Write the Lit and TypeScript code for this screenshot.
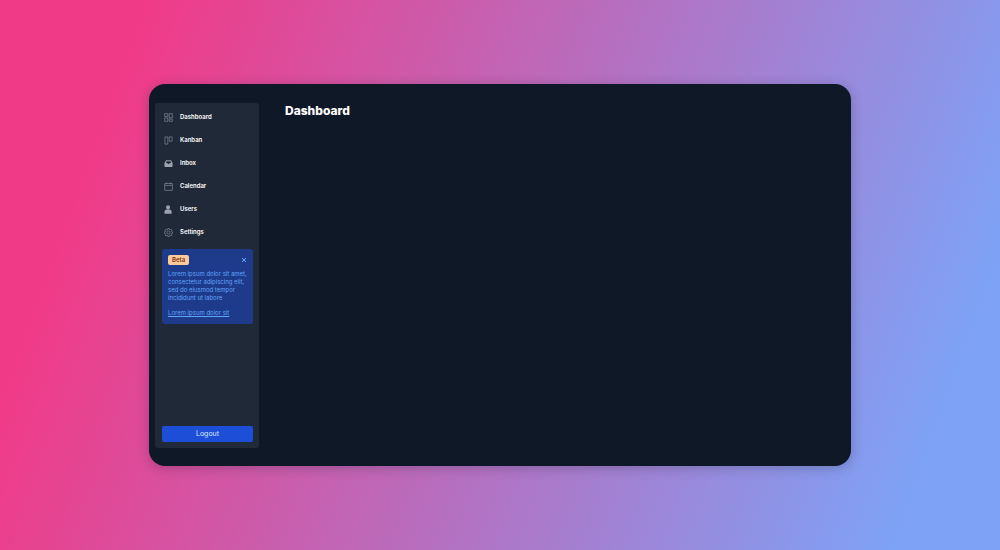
import { LitElement, html, css, svg } from "lit";
import { customElement, state } from "lit/decorators.js";

const icons = {
  dashboard: svg`<path class="line" d="M1.500 1.500h7v6.500h-7zM11.500 1.500h7v9h-7zM1.500 11h7v7.500h-7zM11.500 13.500h7v5h-7z"/>`,
  kanban: svg`<path class="line" d="M2 2h6.500v16H2zM11.500 2H18v9.500h-6.500z"/>`,
  inbox: svg`<path class="fill" fill-rule="evenodd" d="M4.500 3h11L19 9v7a1.500 1.500 0 0 1-1.500 1.500h-15A1.500 1.500 0 0 1 1 16V9zm1.300 2.200L4 9h3.500a2.500 2.500 0 0 0 5 0H16l-1.800-3.800z"/>`,
  calendar: svg`<path class="line" d="M1.500 3.500h17v15h-17zM1.500 8h17M6 1v4M14 1v4"/>`,
  users: svg`<path class="fill" d="M9 .500a4.500 4.500 0 1 1 0 9 4.500 4.500 0 0 1 0-9zM6 10h6a5 5 0 0 1 5 5v3.500a1 1 0 0 1-1 1H2a1 1 0 0 1-1-1V15a5 5 0 0 1 5-5z"/>`,
  settings: svg`<circle class="line" cx="10" cy="10" r="3.500"/><path class="line" d="M8.600 1h2.800l.6 2.200 1.800.8 2-1.200 2 2-1.200 2 .7 1.800 2.200.6v2l-2.200.6-.7 1.800 1.200 2-2 2-2-1.200-1.800.7-.6 2.200H8.600L8 17.100l-1.800-.7-2 1.200-2-2 1.200-2-.7-1.800L.500 11.200v-2l2.200-.6.7-1.800-1.200-2 2-2 2 1.200L8 3.200z"/>`,
};

const entries = [
  { label: "Dashboard", icon: icons.dashboard },
  { label: "Kanban", icon: icons.kanban },
  { label: "Inbox", icon: icons.inbox },
  { label: "Calendar", icon: icons.calendar },
  { label: "Users", icon: icons.users },
  { label: "Settings", icon: icons.settings },
];

@customElement("app-root")
export class AppRoot extends LitElement {
  @state() private noticeOpen = true;

  static styles = css`
    :host {
      display: flex;
      box-sizing: border-box;
      min-height: 100vh;
      padding: 84px 149px;
      font-family: Inter, sans-serif;
      background: linear-gradient(110deg, #f13a87 12%, #7ea2f6 91%);
    }
    * {
      box-sizing: border-box;
    }
    .window {
      flex: 1;
      display: flex;
      gap: 26px;
      padding: 19px 6px 18px;
      border-radius: 16px;
      background: #0f1826;
      box-shadow: 0 2px 12px rgb(15 24 38 / 25%);
    }
    .sidebar {
      flex: 0 0 104px;
      display: flex;
      flex-direction: column;
      padding: 4px 6px 6px 7px;
      border-radius: 3px;
      background: #1f2937;
    }
    .menu {
      display: grid;
      gap: 3px;
      margin: 0;
      padding: 0;
      list-style: none;
    }
    .item {
      display: flex;
      align-items: center;
      gap: 7px;
      height: 20px;
      padding: 0 2px;
      color: #ffffff;
      font-size: 6px;
      font-weight: 600;
      line-height: 8px;
      text-decoration: none;
    }
    .icon {
      width: 9px;
      height: 9px;
      color: #9ca3af;
    }
    .line {
      fill: none;
      stroke: currentColor;
      stroke-width: 1.2;
    }
    .fill {
      fill: currentColor;
    }
    .notice {
      margin-top: 7px;
      padding: 6px 6px 7px;
      border-radius: 3px;
      background: #1e3a8a;
      color: #60a5fa;
      font-size: 6px;
      line-height: 8px;
    }
    .notice-head {
      display: flex;
      align-items: center;
      justify-content: space-between;
      margin-bottom: 5px;
    }
    .badge {
      padding: 1px 4px;
      border-radius: 2px;
      background: #fdcb9b;
      color: #7c2d12;
      font-weight: 600;
    }
    .close {
      display: flex;
      padding: 0;
      border: 0;
      background: none;
      color: #60a5fa;
    }
    .cross {
      width: 6px;
      height: 6px;
    }
    .cross .line {
      stroke-width: 2;
    }
    .text {
      margin: 0 0 7px;
    }
    .link {
      color: inherit;
    }
    .logout {
      margin-top: auto;
      height: 16px;
      padding: 0;
      border: 0;
      border-radius: 2px;
      background: #1d4ed8;
      color: #dbeafe;
      font-family: inherit;
      font-size: 7px;
      line-height: 16px;
    }
    .title {
      margin: 0;
      color: #ffffff;
      font-size: 12px;
      font-weight: 800;
      line-height: 15px;
    }
  `;

  private dismiss() {
    this.noticeOpen = false;
  }

  render() {
    return html`
      <div class="window">
        <aside class="sidebar" aria-label="Sidebar">
          <nav>
            <ul class="menu">
              ${entries.map(
                (entry) => html`<li>
                  <a class="item" href="#"
                    ><svg class="icon" viewBox="0 0 20 20" aria-hidden="true">${entry.icon}</svg
                    >${entry.label}</a
                  >
                </li>`
              )}
            </ul>
          </nav>
          ${this.noticeOpen
            ? html`<section class="notice">
                <div class="notice-head">
                  <span class="badge">Beta</span>
                  <button class="close" aria-label="Close" @click=${this.dismiss}>
                    <svg class="cross" viewBox="0 0 12 12" aria-hidden="true">
                      <path class="line" d="M2 2l8 8M10 2l-8 8" />
                    </svg>
                  </button>
                </div>
                <p class="text">
                  Lorem ipsum dolor sit amet, consectetur adipiscing elit, sed do eiusmod tempor
                  incididunt ut labore
                </p>
                <a class="link" href="#">Lorem ipsum dolor sit</a>
              </section>`
            : null}
          <button class="logout">Logout</button>
        </aside>
        <main>
          <h1 class="title">Dashboard</h1>
        </main>
      </div>
    `;
  }
}
